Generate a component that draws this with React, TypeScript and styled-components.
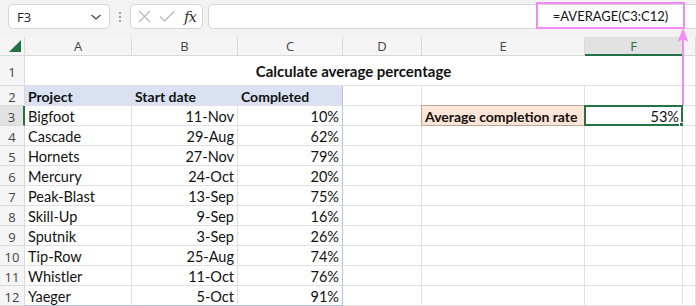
import React from 'react';
import styled, { createGlobalStyle, css } from 'styled-components';

const Global = createGlobalStyle`
  html, body { margin: 0; padding: 0; background: #fff; }
  body { font-family: Lato, "Liberation Sans", sans-serif; }
  * { box-sizing: border-box; }
`;

const Page = styled.div`
  position: relative;
  width: 696px;
  height: 306px;
  overflow: hidden;
  background: #fff;
`;

const Toolbar = styled.div`
  display: flex;
  align-items: flex-start;
  height: 37px;
  padding: 4px 0 0 8px;
  background: #f3f3f3;
`;

const NameBox = styled.div`
  width: 102px;
  height: 25px;
  border: 1px solid #d6d6d6;
  border-radius: 5px;
  background: #fff;
  display: flex;
  align-items: center;
  justify-content: space-between;
  padding: 0 7px 0 8px;
  font-family: "Open Sans", "Liberation Sans", sans-serif;
  font-size: 13px;
  color: #222;
`;

const Dots = styled.div`
  width: 20px;
  height: 25px;
  display: flex;
  flex-direction: column;
  align-items: center;
  justify-content: center;
  gap: 2px;
  span { width: 2px; height: 2px; background: #8a8a8a; border-radius: 1px; }
`;

const FxBox = styled.div`
  width: 73px;
  height: 25px;
  border: 1px solid #d6d6d6;
  border-radius: 5px;
  background: #fff;
  display: flex;
  align-items: center;
  padding: 0 6px 0 7px;
  gap: 8px;
`;

const FxLabel = styled.span`
  font-family: "DejaVu Serif", "Liberation Serif", serif;
  font-style: italic;
  font-size: 15px;
  color: #333;
  margin-left: auto;
  letter-spacing: -1px;
`;

const FormulaBox = styled.div`
  flex: 1;
  margin-left: 5px;
  margin-right: -12px;
  height: 25px;
  border: 1px solid #d6d6d6;
  border-radius: 5px;
  background: #fff;
  display: flex;
  align-items: center;
  justify-content: flex-end;
  padding-right: 22px;
`;

const FormulaText = styled.span`
  width: 149px;
  height: 27px;
  margin-top: -2px;
  border: 2px solid #f48af4;
  display: flex;
  align-items: center;
  justify-content: center;
  font-family: Lato, "Open Sans", sans-serif;
  font-size: 13px;
  color: #111;
`;

const Sheet = styled.div`
  display: grid;
  grid-template-columns: 25px 107px 106px 105px 79px 163px 98px 1fr;
  grid-template-rows: 19px 30px repeat(11, 20px);
`;

const HeadCell = styled.div<{ $active?: boolean; $row?: boolean }>`
  background: ${(p) => (p.$active ? '#e2e2e2' : '#f5f5f5')};
  border-right: 1px solid #dadada;
  border-bottom: 1px solid #dadada;
  display: flex;
  align-items: center;
  justify-content: center;
  font-family: "Open Sans", "Liberation Sans", sans-serif;
  font-size: 13px;
  color: ${(p) => (p.$active && !p.$row ? '#217346' : '#444')};
  ${(p) =>
    p.$active && !p.$row &&
    css`border-bottom: 2px solid #217346;`}
  ${(p) =>
    p.$active && p.$row &&
    css`border-right: 2px solid #217346;`}
  ${(p) => p.$row && css`padding-top: 2px;`}
`;

const Corner = styled.div`
  background: #f5f5f5;
  border-right: 1px solid #dadada;
  border-bottom: 1px solid #dadada;
  display: flex;
  align-items: flex-end;
  justify-content: flex-end;
  padding: 0 3px 3px 0;
`;

const Title = styled.div`
  grid-column: 2 / 8;
  border-right: 1px solid #e1e1e1;
  border-bottom: 1px solid #e1e1e1;
  display: flex;
  align-items: flex-end;
  justify-content: center;
  padding-bottom: 5px;
  font-weight: 700;
  font-size: 15px;
  color: #111;
`;

const Cell = styled.div<{
  $right?: boolean;
  $bold?: boolean;
  $fill?: string;
  $tableEdge?: boolean;
  $tableBottom?: boolean;
  $boxed?: boolean;
  $selected?: boolean;
}>`
  position: relative;
  display: flex;
  align-items: center;
  justify-content: ${(p) => (p.$right ? 'flex-end' : 'flex-start')};
  padding: 1px 3px 0 3px;
  font-size: 14.5px;
  color: #111;
  font-weight: ${(p) => (p.$bold ? 700 : 400)};
  ${(p) => p.$bold && css`font-size: 14px;`}
  background: ${(p) => p.$fill || '#fff'};
  border-right: 1px solid ${(p) => (p.$tableEdge ? '#b4c6e7' : '#e1e1e1')};
  border-bottom: 1px solid ${(p) => (p.$tableBottom ? '#b4c6e7' : '#e1e1e1')};
  white-space: nowrap;
  ${(p) =>
    p.$boxed &&
    css`
      border: 1px solid #bfa89a;
      margin: -1px 0 0 -1px;
    `}
  ${(p) =>
    p.$selected &&
    css`
      border: 2px solid #217346;
      margin: -1px 0 0 -1px;
      padding-right: 2px;
    `}
`;

const Handle = styled.span`
  position: absolute;
  right: -4px;
  bottom: -4px;
  width: 6px;
  height: 6px;
  background: #217346;
  border: 1px solid #fff;
`;

const Arrow = styled.svg`
  position: absolute;
  left: 676px;
  top: 26px;
`;

const data: [string, string, string][] = [
  ['Bigfoot', '11-Nov', '10%'],
  ['Cascade', '29-Aug', '62%'],
  ['Hornets', '27-Nov', '79%'],
  ['Mercury', '24-Oct', '20%'],
  ['Peak-Blast', '13-Sep', '75%'],
  ['Skill-Up', '9-Sep', '16%'],
  ['Sputnik', '3-Sep', '26%'],
  ['Tip-Row', '25-Aug', '74%'],
  ['Whistler', '11-Oct', '76%'],
  ['Yaeger', '5-Oct', '91%'],
];

const cols = ['A', 'B', 'C', 'D', 'E', 'F', ''];

export default function App() {
  return (
    <Page>
      <Global />
      <Toolbar>
        <NameBox>
          <span>F3</span>
          <svg width="12" height="8" viewBox="0 0 12 8">
            <path d="M1.5 2 L6 6 L10.5 2" fill="none" stroke="#444" strokeWidth="1.2" />
          </svg>
        </NameBox>
        <Dots>
          <span />
          <span />
          <span />
        </Dots>
        <FxBox>
          <svg width="13" height="13" viewBox="0 0 13 13">
            <path d="M1 1 L12 12 M12 1 L1 12" stroke="#b5b5b5" strokeWidth="1.1" />
          </svg>
          <svg width="16" height="13" viewBox="0 0 16 13">
            <path d="M1 6.5 L5.5 11 L15 1.5" fill="none" stroke="#b5b5b5" strokeWidth="1.1" />
          </svg>
          <FxLabel>fx</FxLabel>
        </FxBox>
        <FormulaBox>
          <FormulaText>=AVERAGE(C3:C12)</FormulaText>
        </FormulaBox>
      </Toolbar>
      <Sheet>
        <Corner>
          <svg width="12" height="12" viewBox="0 0 12 12">
            <polygon points="12,0 12,12 0,12" fill="#217346" />
          </svg>
        </Corner>
        {cols.map((c, i) => (
          <HeadCell key={i} $active={c === 'F'}>
            {c}
          </HeadCell>
        ))}

        <HeadCell $row>1</HeadCell>
        <Title>Calculate average percentage</Title>
        <Cell />

        <HeadCell $row>2</HeadCell>
        <Cell $bold $fill="#d9e1f2">Project</Cell>
        <Cell $bold $fill="#d9e1f2">Start date</Cell>
        <Cell $bold $fill="#d9e1f2" $tableEdge>Completed</Cell>
        <Cell />
        <Cell />
        <Cell />
        <Cell />

        {data.map((r, i) => {
          const row = i + 3;
          const last = row === 12;
          return (
            <React.Fragment key={row}>
              <HeadCell $row $active={row === 3}>{row}</HeadCell>
              <Cell $tableBottom={last}>{r[0]}</Cell>
              <Cell $right $tableBottom={last}>{r[1]}</Cell>
              <Cell $right $tableEdge $tableBottom={last}>{r[2]}</Cell>
              <Cell />
              {row === 3 ? (
                <>
                  <Cell $bold $fill="#fce4d6" $boxed>Average completion rate</Cell>
                  <Cell $right $selected>
                    53%
                    <Handle />
                  </Cell>
                </>
              ) : (
                <>
                  <Cell />
                  <Cell />
                </>
              )}
              <Cell />
            </React.Fragment>
          );
        })}
      </Sheet>
      <Arrow width="14" height="80" viewBox="0 0 14 80">
        <line x1="7" y1="12" x2="7" y2="79" stroke="#f48af4" strokeWidth="2" />
        <polygon points="7,2 1.5,16 7,13 12.5,16" fill="#f48af4" />
      </Arrow>
    </Page>
  );
}
